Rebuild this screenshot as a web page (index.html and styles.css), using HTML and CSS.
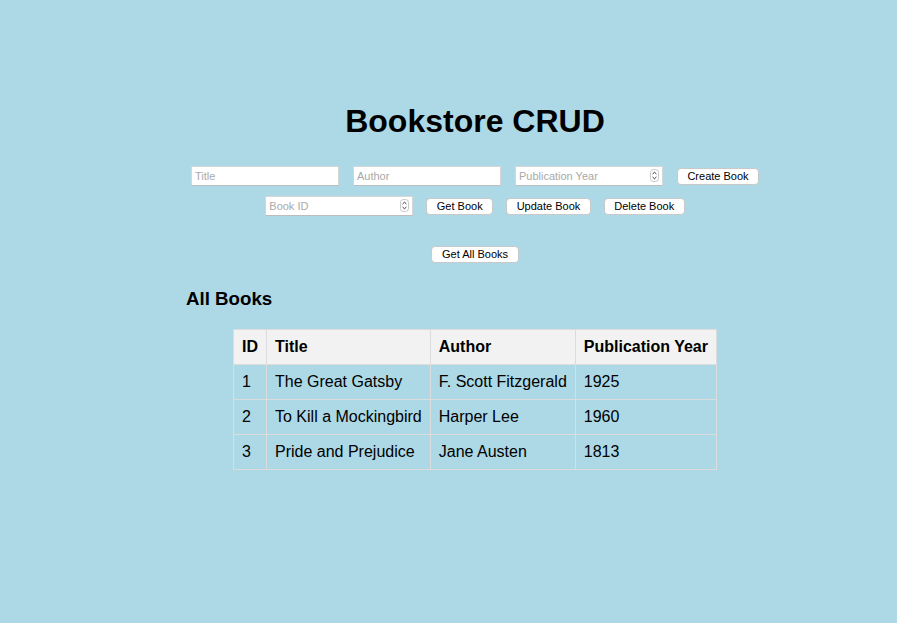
FILE: index.html
```html
<!DOCTYPE html>
<html lang="en">
<head>
<meta charset="utf-8">
<title>Bookstore CRUD</title>
<link rel="stylesheet" href="styles.css">
</head>
<body>
<div class="container">
  <h1 class="title">Bookstore CRUD</h1>
  <div class="form-row">
    <input class="field" type="text" placeholder="Title">
    <input class="field" type="text" placeholder="Author">
    <span class="num-wrap">
      <input class="field num" type="number" placeholder="Publication Year">
      <svg class="spin" width="9" height="13" viewBox="0 0 9 13"><rect x="0.5" y="0.5" width="8" height="12" rx="3" fill="#fff" stroke="#c8c8c8"/><path d="M2.6 5 L4.5 3.2 L6.4 5" fill="none" stroke="#333" stroke-width="1"/><path d="M2.6 8 L4.5 9.8 L6.4 8" fill="none" stroke="#333" stroke-width="1"/></svg>
    </span>
    <button class="btn">Create Book</button>
  </div>
  <div class="form-row second">
    <span class="num-wrap">
      <input class="field num" type="number" placeholder="Book ID">
      <svg class="spin" width="9" height="13" viewBox="0 0 9 13"><rect x="0.5" y="0.5" width="8" height="12" rx="3" fill="#fff" stroke="#c8c8c8"/><path d="M2.6 5 L4.5 3.2 L6.4 5" fill="none" stroke="#333" stroke-width="1"/><path d="M2.6 8 L4.5 9.8 L6.4 8" fill="none" stroke="#333" stroke-width="1"/></svg>
    </span>
    <button class="btn">Get Book</button>
    <button class="btn">Update Book</button>
    <button class="btn">Delete Book</button>
  </div>
  <div class="form-row all">
    <button class="btn">Get All Books</button>
  </div>
  <h3 class="section">All Books</h3>
  <table class="books">
    <thead>
      <tr><th>ID</th><th>Title</th><th>Author</th><th>Publication Year</th></tr>
    </thead>
    <tbody>
      <tr><td>1</td><td>The Great Gatsby</td><td>F. Scott Fitzgerald</td><td>1925</td></tr>
      <tr><td>2</td><td>To Kill a Mockingbird</td><td>Harper Lee</td><td>1960</td></tr>
      <tr><td>3</td><td>Pride and Prejudice</td><td>Jane Austen</td><td>1813</td></tr>
    </tbody>
  </table>
</div>
</body>
</html>
```
FILE: styles.css
```css
html, body {
  margin: 0;
  padding: 0;
  background: #add8e6;
  font-family: "Liberation Sans", Arial, Helvetica, sans-serif;
  color: #000;
}

.container {
  width: 578px;
  margin-left: 186px;
  padding-top: 103px;
}

.title {
  margin: 0 0 26px;
  font-size: 32px;
  font-weight: bold;
  text-align: center;
  line-height: 37px;
}

.form-row {
  display: flex;
  justify-content: center;
  align-items: center;
  gap: 14px;
  height: 20px;
}

.form-row.second {
  margin-top: 10px;
  gap: 13px;
}

.form-row.all {
  margin-top: 28px;
}

.field {
  box-sizing: border-box;
  width: 148px;
  height: 20px;
  margin: 0;
  padding: 1px 3px;
  font-family: "Liberation Sans", Arial, sans-serif;
  font-size: 11px;
  background: #fff;
  border: 1px solid #d6d6d6;
  border-bottom-color: #bdbdbd;
  border-radius: 0;
  outline: none;
}

.field::placeholder {
  color: #a9a9a9;
}

.num {
  -moz-appearance: textfield;
  appearance: textfield;
  padding-right: 16px;
}

.num::-webkit-inner-spin-button,
.num::-webkit-outer-spin-button {
  -webkit-appearance: none;
  margin: 0;
}

.num-wrap {
  position: relative;
  display: block;
  width: 148px;
  height: 20px;
}

.spin {
  position: absolute;
  right: 4px;
  top: 3px;
}

.btn {
  box-sizing: border-box;
  height: 17px;
  margin: 0;
  padding: 0 9.5px;
  font-family: "Liberation Sans", Arial, sans-serif;
  font-size: 11px;
  line-height: 15px;
  color: #000;
  background: #fff;
  border: 1px solid #c9c9c9;
  border-radius: 4px;
}

.section {
  margin: 24px 0 0;
  font-size: 18.72px;
  font-weight: bold;
  line-height: 22px;
}

.books {
  margin: 19px auto 0;
  border-collapse: collapse;
  font-size: 16px;
}

.books th,
.books td {
  border: 1px solid #dcdcdc;
  padding: 8px;
  text-align: left;
  line-height: 18px;
}

.books th {
  background: #f2f2f2;
  font-weight: bold;
}
```
